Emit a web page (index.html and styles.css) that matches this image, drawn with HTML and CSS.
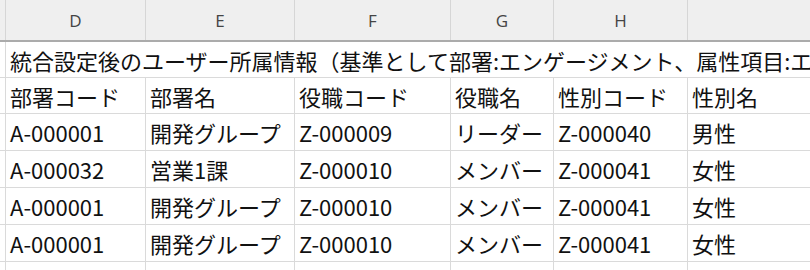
FILE: index.html
```html
<!DOCTYPE html>
<html lang="ja">
<head>
<meta charset="utf-8">
<title>Sheet</title>
<link rel="stylesheet" href="styles.css">
</head>
<body>
<div class="sheet">
  <div class="row hdr">
    <div class="stub"></div>
    <div class="c cd">D</div>
    <div class="c ce">E</div>
    <div class="c cf">F</div>
    <div class="c cg">G</div>
    <div class="c ch">H</div>
    <div class="c ci"></div>
  </div>
  <div class="row title">
    <div class="stub"></div>
    <div class="c span">統合設定後のユーザー所属情報（基準として部署:エンゲージメント、属性項目:エ</div>
  </div>
  <div class="row r36">
    <div class="stub"></div>
    <div class="c cd">部署コード</div>
    <div class="c ce">部署名</div>
    <div class="c cf">役職コード</div>
    <div class="c cg">役職名</div>
    <div class="c ch">性別コード</div>
    <div class="c ci">性別名</div>
  </div>
  <div class="row r37">
    <div class="stub"></div>
    <div class="c cd">A-000001</div>
    <div class="c ce">開発グループ</div>
    <div class="c cf">Z-000009</div>
    <div class="c cg">リーダー</div>
    <div class="c ch">Z-000040</div>
    <div class="c ci">男性</div>
  </div>
  <div class="row r37">
    <div class="stub"></div>
    <div class="c cd">A-000032</div>
    <div class="c ce">営業1課</div>
    <div class="c cf">Z-000010</div>
    <div class="c cg">メンバー</div>
    <div class="c ch">Z-000041</div>
    <div class="c ci">女性</div>
  </div>
  <div class="row r37">
    <div class="stub"></div>
    <div class="c cd">A-000001</div>
    <div class="c ce">開発グループ</div>
    <div class="c cf">Z-000010</div>
    <div class="c cg">メンバー</div>
    <div class="c ch">Z-000041</div>
    <div class="c ci">女性</div>
  </div>
  <div class="row r37">
    <div class="stub"></div>
    <div class="c cd">A-000001</div>
    <div class="c ce">開発グループ</div>
    <div class="c cf">Z-000010</div>
    <div class="c cg">メンバー</div>
    <div class="c ch">Z-000041</div>
    <div class="c ci">女性</div>
  </div>
  <div class="row rlast">
    <div class="stub"></div>
    <div class="c cd"></div>
    <div class="c ce"></div>
    <div class="c cf"></div>
    <div class="c cg"></div>
    <div class="c ch"></div>
    <div class="c ci"></div>
  </div>
</div>
</body>
</html>
```

FILE: styles.css
```css
html, body {
  margin: 0;
  padding: 0;
  background: #ffffff;
}
body {
  width: 810px;
  height: 270px;
  overflow: hidden;
  font-family: "Noto Sans CJK JP", "Noto Sans", sans-serif;
  font-size: 22px;
  color: #111111;
}
.sheet {
  display: flex;
  flex-direction: column;
  width: 810px;
  height: 270px;
  overflow: hidden;
}
.row {
  display: flex;
  flex: none;
}
.stub {
  flex: none;
  width: 5px;
  box-sizing: border-box;
  border-bottom: 1px solid #dadada;
}
.c {
  flex: none;
  box-sizing: border-box;
  border-left: 1px solid #dadada;
  border-bottom: 1px solid #dadada;
  padding-left: 4px;
  display: flex;
  align-items: center;
  white-space: nowrap;
  overflow: hidden;
}
.cd { width: 140px; }
.ce { width: 149px; }
.cf { width: 156px; }
.cg { width: 103px; }
.ch { width: 134px; }
.ci { flex: 1; }
.span { flex: 1; }

.hdr {
  height: 42px;
  background: #efefef;
  border-bottom: 2px solid #ababab;
  box-sizing: border-box;
}
.hdr .stub { border-bottom: none; }
.hdr .c {
  border-bottom: none;
  border-left-color: #d6d6d6;
  justify-content: center;
  padding-left: 0;
  font-family: "Open Sans", "Noto Sans", sans-serif;
  font-size: 17px;
  color: #444444;
}
.title { height: 36px; }
.r36 { height: 36px; }
.r37 { height: 37px; }
.rlast { height: 8px; }
.rlast .stub, .rlast .c { border-bottom: none; }
```
